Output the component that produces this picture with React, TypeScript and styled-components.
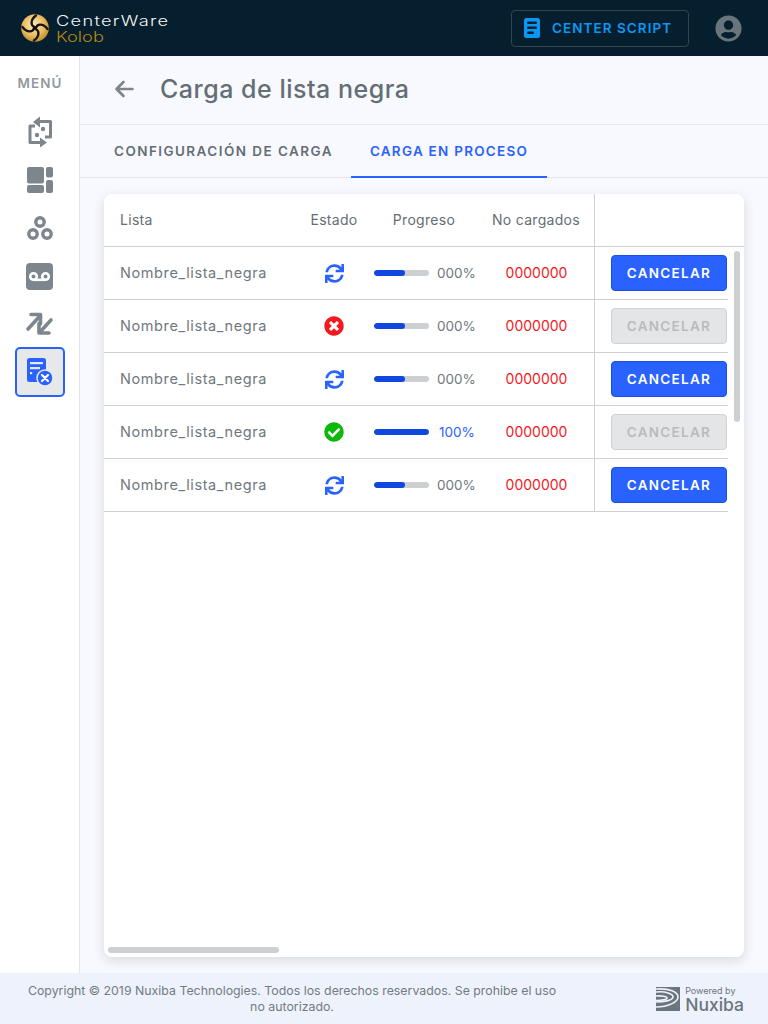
import React from "react";
import styled, { createGlobalStyle } from "styled-components";
import { FaSync, FaTimesCircle, FaCheckCircle, FaUserCircle } from "react-icons/fa";

const FONT = `"Inter", "Open Sans", "Liberation Sans", sans-serif`;

const GlobalStyle = createGlobalStyle`
  html, body {
    margin: 0;
    padding: 0;
    height: 100%;
    background: #ffffff;
    font-family: ${FONT};
  }
  * { box-sizing: border-box; }
`;

type RowStatus = "syncing" | "error" | "done";

interface RowData {
  status: RowStatus;
  progress: number;
  label: string;
}

const rows: RowData[] = [
  { status: "syncing", progress: 56, label: "000%" },
  { status: "error", progress: 56, label: "000%" },
  { status: "syncing", progress: 56, label: "000%" },
  { status: "done", progress: 100, label: "100%" },
  { status: "syncing", progress: 56, label: "000%" },
];

const LogoMark = () => (
  <svg width="28" height="28" viewBox="0 0 28 28">
    <defs>
      <radialGradient id="gold" cx="45%" cy="40%" r="70%">
        <stop offset="0%" stopColor="#fdf0c8" />
        <stop offset="55%" stopColor="#e8bb5c" />
        <stop offset="100%" stopColor="#a9781f" />
      </radialGradient>
    </defs>
    <circle cx="14" cy="14" r="13.800" fill="url(#gold)" />
    <g fill="none" stroke="#17130f" strokeWidth="2.300" strokeLinecap="round">
      {[0, 90, 180, 270].map((deg) => (
        <path key={deg} d="M14 13C9.500 12 9 6 15 1.500" transform={`rotate(${deg} 14 14)`} />
      ))}
    </g>
  </svg>
);

const ScriptIcon = () => (
  <svg width="16" height="20" viewBox="0 0 16 20">
    <rect width="16" height="20" rx="2.500" fill="#0b98f5" />
    <rect x="3" y="3.500" width="10" height="2.600" rx="1.300" fill="#051f2e" />
    <rect x="3" y="8.500" width="10" height="2.600" rx="1.300" fill="#051f2e" />
    <rect x="3" y="13.500" width="7" height="2.600" rx="1.300" fill="#051f2e" />
  </svg>
);

const BackArrow = () => (
  <svg width="20" height="18" viewBox="0 0 20 18" fill="none" stroke="#7b858b" strokeWidth="2.600" strokeLinecap="round" strokeLinejoin="round">
    <path d="M18.500 9H2.500M9.500 2L2.500 9l7 7" />
  </svg>
);

const ICON = "#7d868d";

const TransferIcon = () => (
  <svg width="26" height="32" viewBox="0 0 26 32" fill="none">
    <path d="M12 5.500H23.500V21H18" stroke={ICON} strokeWidth="3" strokeLinejoin="round" />
    <path d="M14 26.500H3V10H8" stroke={ICON} strokeWidth="3" strokeLinejoin="round" />
    <path d="M13 .5V11.500L6 6zM13 21.500V31.500L20 26.500z" fill={ICON} />
    <circle cx="16" cy="13" r="2.200" fill={ICON} />
    <circle cx="10" cy="19" r="2.200" fill={ICON} />
  </svg>
);

const DashboardIcon = () => (
  <svg width="26" height="26" viewBox="0 0 26 26" fill={ICON}>
    <rect x="0" y="0" width="17" height="16.500" rx="2" />
    <rect x="19" y="0" width="7" height="10.500" rx="2" />
    <rect x="19" y="13" width="7" height="13" rx="2" />
    <rect x="0" y="18" width="17" height="8" rx="2" />
  </svg>
);

const CirclesIcon = () => (
  <svg width="26" height="24" viewBox="0 0 26 24" fill="none" stroke={ICON} strokeWidth="3.400">
    <circle cx="13" cy="6" r="4.200" />
    <circle cx="6" cy="18" r="4.200" />
    <circle cx="20" cy="18" r="4.200" />
  </svg>
);

const VoicemailIcon = () => (
  <svg width="27" height="27" viewBox="0 0 27 27">
    <rect width="27" height="27" rx="4" fill={ICON} />
    <circle cx="7.500" cy="13.500" r="3.300" fill="none" stroke="#fff" strokeWidth="2.600" />
    <circle cx="19.500" cy="13.500" r="3.300" fill="none" stroke="#fff" strokeWidth="2.600" />
    <path d="M7.500 16.800H19.500" stroke="#fff" strokeWidth="2.600" />
  </svg>
);

const CrossArrowsIcon = () => (
  <svg width="32" height="32" viewBox="0 0 32 32" fill="none" stroke={ICON} strokeWidth="3.600" strokeLinecap="round" strokeLinejoin="round">
    <path d="M4 21L15 9" />
    <path d="M7 6.500H16.500V16" />
    <path d="M27 12L16 24" />
    <path d="M15 15.500V25H25" />
  </svg>
);

const ListCancelIcon = () => (
  <svg width="26" height="28" viewBox="0 0 26 28">
    <rect x="0" y="0" width="19" height="24" rx="2.500" fill="#2962ff" />
    <rect x="3" y="4" width="13" height="2.200" fill="#e7e8ea" />
    <rect x="3" y="9" width="10" height="2.200" fill="#e7e8ea" />
    <rect x="3" y="14" width="2.200" height="2.200" fill="#e7e8ea" />
    <circle cx="18" cy="20" r="8" fill="#2962ff" stroke="#e7e8ea" strokeWidth="1.500" />
    <path d="M15 17l6 6M21 17l-6 6" stroke="#fff" strokeWidth="2.200" strokeLinecap="round" />
  </svg>
);

const NuxibaMark = () => (
  <svg width="24" height="24" viewBox="0 0 24 24">
    <rect width="24" height="24" fill="#6b767c" />
    <g fill="none" stroke="#eef2fd" strokeWidth="1.600">
      <path d="M0 5c10-1 17 2 17 5s-8 5-17 5" />
      <path d="M0 9c6-.5 11 .5 11 2s-5 2.500-11 2.500" />
      <path d="M0 2c14-1 22 3 22 8s-10 10-22 10" />
    </g>
  </svg>
);

const StatusIcon = ({ status }: { status: RowStatus }) => {
  if (status === "error") return <FaTimesCircle size={20} color="#f5191f" />;
  if (status === "done") return <FaCheckCircle size={20} color="#0cb80c" />;
  return <FaSync size={19} color="#2962ff" />;
};

export default function App() {
  return (
    <Page>
      <GlobalStyle />
      <Header>
        <Brand>
          <LogoMark />
          <BrandText>
            <BrandName>CenterWare</BrandName>
            <BrandSub>Kolob</BrandSub>
          </BrandText>
        </Brand>
        <HeaderActions>
          <ScriptButton>
            <ScriptIcon />
            CENTER SCRIPT
          </ScriptButton>
          <FaUserCircle size={27} color="#68757c" />
        </HeaderActions>
      </Header>

      <Body>
        <Sidebar>
          <MenuLabel>MENÚ</MenuLabel>
          <NavItem><TransferIcon /></NavItem>
          <NavItem><DashboardIcon /></NavItem>
          <NavItem><CirclesIcon /></NavItem>
          <NavItem><VoicemailIcon /></NavItem>
          <NavItem><CrossArrowsIcon /></NavItem>
          <NavItem $active><ListCancelIcon /></NavItem>
        </Sidebar>

        <Main>
          <TitleBar>
            <BackArrow />
            <Title>Carga de lista negra</Title>
          </TitleBar>
          <Tabs>
            <Tab>CONFIGURACIÓN DE CARGA</Tab>
            <Tab $active>CARGA EN PROCESO</Tab>
          </Tabs>
          <Content>
            <Card>
              <HeadRow>
                <HeadCell>Lista</HeadCell>
                <HeadCell $center>Estado</HeadCell>
                <HeadCell $center>Progreso</HeadCell>
                <HeadCell $center>No cargados</HeadCell>
                <ActionCell />
              </HeadRow>
              {rows.map((row, i) => (
                <Row key={i}>
                  <NameCell>Nombre_lista_negra</NameCell>
                  <IconCell><StatusIcon status={row.status} /></IconCell>
                  <ProgressCell>
                    <Track>
                      <Fill style={{ width: `${row.progress}%` }} />
                    </Track>
                    <Percent $done={row.status === "done"}>{row.label}</Percent>
                  </ProgressCell>
                  <FailedCell>0000000</FailedCell>
                  <ActionCell>
                    <CancelButton disabled={row.status !== "syncing"}>CANCELAR</CancelButton>
                  </ActionCell>
                </Row>
              ))}
              <VerticalThumb />
              <HorizontalThumb />
            </Card>
          </Content>
        </Main>
      </Body>

      <Footer>
        <Copyright>
          Copyright © 2019 Nuxiba Technologies. Todos los derechos reservados. Se prohibe el uso no autorizado.
        </Copyright>
        <Powered>
          <NuxibaMark />
          <PoweredText>
            <PoweredBy>Powered by</PoweredBy>
            <PoweredName>Nuxiba</PoweredName>
          </PoweredText>
        </Powered>
      </Footer>
    </Page>
  );
}

const Page = styled.div`
  display: flex;
  flex-direction: column;
  width: 768px;
  height: 1024px;
  overflow: hidden;
`;

const Header = styled.header`
  display: flex;
  align-items: center;
  justify-content: space-between;
  height: 56px;
  flex: none;
  padding: 0 26px 0 21px;
  background: #051f2e;
`;

const Brand = styled.div`
  display: flex;
  align-items: center;
  gap: 7px;
`;

const BrandText = styled.div`
  display: flex;
  flex-direction: column;
  padding-top: 2px;
  line-height: 16px;
  transform: scaleX(1.3);
  transform-origin: left center;
`;

const BrandName = styled.span`
  font-size: 14px;
  font-weight: 300;
  letter-spacing: 1px;
  color: #f3f4f5;
`;

const BrandSub = styled.span`
  font-size: 14px;
  font-weight: 300;
  letter-spacing: 0;
  color: #b98a12;
`;

const HeaderActions = styled.div`
  display: flex;
  align-items: center;
  gap: 26px;
`;

const ScriptButton = styled.div`
  display: flex;
  align-items: center;
  gap: 12px;
  width: 178px;
  height: 37px;
  padding-left: 12px;
  border: 1px solid #33444f;
  border-radius: 4px;
  font-size: 13.500px;
  font-weight: 600;
  letter-spacing: 1.05px;
  color: #0b98f5;
`;

const Body = styled.div`
  display: flex;
  flex: 1;
  min-height: 0;
`;

const Sidebar = styled.nav`
  display: flex;
  flex-direction: column;
  align-items: center;
  width: 80px;
  flex: none;
  padding-top: 17px;
  background: #ffffff;
  border-right: 1px solid #e3e5e8;
`;

const MenuLabel = styled.div`
  margin-bottom: 14px;
  padding-left: 1px;
  font-size: 13.500px;
  line-height: 20px;
  font-weight: 600;
  letter-spacing: 1px;
  color: #929aa0;
`;

const NavItem = styled.div<{ $active?: boolean }>`
  display: flex;
  align-items: center;
  justify-content: center;
  width: 50px;
  height: ${(p) => (p.$active ? "50px" : "48px")};
  padding-top: ${(p) => (p.$active ? "0" : "2px")};
  border-radius: 5px;
  border: ${(p) => (p.$active ? "2px solid #2962ff" : "none")};
  background: ${(p) => (p.$active ? "#e7e8ea" : "transparent")};
`;

const Main = styled.main`
  display: flex;
  flex-direction: column;
  flex: 1;
  min-width: 0;
  background: #f8f9fe;
`;

const TitleBar = styled.div`
  display: flex;
  align-items: center;
  gap: 26px;
  height: 69px;
  flex: none;
  padding: 0 0 2px 34px;
  border-bottom: 1px solid #e3e5e8;
`;

const Title = styled.h1`
  margin: 0;
  font-size: 25px;
  font-weight: 500;
  letter-spacing: 0.5px;
  color: #646e75;
`;

const Tabs = styled.div`
  display: flex;
  height: 53px;
  flex: none;
  padding-left: 15px;
  border-bottom: 1px solid #e3e5e8;
`;

const Tab = styled.div<{ $active?: boolean }>`
  display: flex;
  align-items: center;
  justify-content: center;
  height: 53px;
  padding: ${(p) => (p.$active ? "0 19px" : "0 18px 0 19px")};
  font-size: 13.500px;
  font-weight: 600;
  letter-spacing: ${(p) => (p.$active ? "1.25px" : "1.44px")};
  color: ${(p) => (p.$active ? "#2962ff" : "#646e75")};
  border-bottom: 2px solid ${(p) => (p.$active ? "#2962ff" : "transparent")};
`;

const Content = styled.div`
  flex: 1;
  min-height: 0;
  padding: 16px 24px 16px;
`;

const Card = styled.section`
  position: relative;
  height: 100%;
  background: #ffffff;
  border-radius: 8px;
  box-shadow: 0 4px 12px rgba(30, 40, 60, 0.14);
  overflow: hidden;
`;

const COLUMNS = "194px 72px 108px 116px 134px";

const HeadRow = styled.div`
  display: grid;
  grid-template-columns: ${COLUMNS} 16px;
  height: 53px;
  border-bottom: 1px solid #cfd2d5;
`;

const HeadCell = styled.div<{ $center?: boolean }>`
  display: flex;
  align-items: center;
  justify-content: ${(p) => (p.$center ? "center" : "flex-start")};
  padding-left: ${(p) => (p.$center ? "0" : "16px")};
  padding-bottom: 2px;
  font-size: 14px;
  letter-spacing: 0.3px;
  color: #646e75;
`;

const Row = styled.div`
  display: grid;
  grid-template-columns: ${COLUMNS};
  width: 624px;
  height: 53px;
  border-bottom: 1px solid #cfd2d5;
`;

const NameCell = styled.div`
  display: flex;
  align-items: center;
  padding: 0 0 1px 16px;
  font-size: 14.500px;
  letter-spacing: 0.6px;
  color: #6f787e;
`;

const IconCell = styled.div`
  display: flex;
  align-items: center;
  justify-content: center;
`;

const ProgressCell = styled.div`
  display: flex;
  align-items: center;
  gap: 8px;
  padding-left: 4px;
`;

const Track = styled.div`
  width: 55px;
  height: 6px;
  flex: none;
  border-radius: 3px;
  background: #ccd0d3;
  overflow: hidden;
`;

const Fill = styled.div`
  height: 100%;
  border-radius: 3px;
  background: #0f47e0;
`;

const Percent = styled.span<{ $done?: boolean }>`
  padding-bottom: 1px;
  font-size: 13.500px;
  color: ${(p) => (p.$done ? "#2962ff" : "#6f787e")};
  margin-left: ${(p) => (p.$done ? "2px" : "0")};
`;

const FailedCell = styled.div`
  display: flex;
  align-items: center;
  justify-content: center;
  padding: 0 0 1px 1px;
  font-size: 14px;
  color: #f5191f;
`;

const ActionCell = styled.div`
  display: flex;
  align-items: center;
  padding-left: 16px;
  border-left: 1px solid #cfd2d5;
`;

const CancelButton = styled.button`
  width: 116px;
  height: 36px;
  padding: 0;
  border-radius: 4px;
  border: 1px solid #1a4fe6;
  background: #2962ff;
  color: #ffffff;
  font-family: ${FONT};
  font-size: 13.500px;
  font-weight: 600;
  letter-spacing: 1.3px;

  &:disabled {
    border-color: #cfd1d4;
    background: #e4e5e7;
    color: #b9bbbe;
  }
`;

const VerticalThumb = styled.div`
  position: absolute;
  top: 57px;
  right: 4px;
  width: 6px;
  height: 171px;
  border-radius: 3px;
  background: #ccd0d3;
`;

const HorizontalThumb = styled.div`
  position: absolute;
  left: 4px;
  bottom: 4px;
  width: 171px;
  height: 6px;
  border-radius: 3px;
  background: #ccd0d3;
`;

const Footer = styled.footer`
  display: flex;
  align-items: center;
  justify-content: space-between;
  height: 51px;
  flex: none;
  padding: 0 24px 0 24px;
  background: #eef2fd;
`;

const Copyright = styled.p`
  width: 536px;
  margin: 0;
  font-size: 12.350px;
  line-height: 16px;
  text-align: center;
  color: #727b81;
`;

const Powered = styled.div`
  display: flex;
  align-items: center;
  gap: 5px;
`;

const PoweredText = styled.div`
  display: flex;
  flex-direction: column;
  padding-top: 2px;
  color: #6b767c;
`;

const PoweredBy = styled.span`
  font-size: 9px;
  line-height: 11px;
`;

const PoweredName = styled.span`
  font-size: 17.500px;
  line-height: 18px;
  font-weight: 500;
`;
